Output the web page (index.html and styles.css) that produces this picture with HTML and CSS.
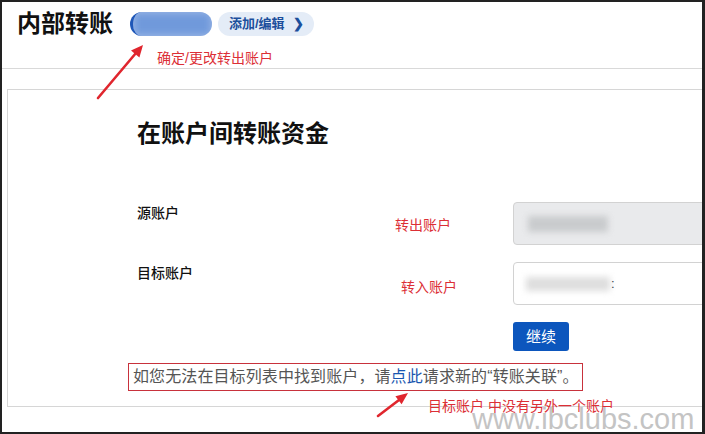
FILE: index.html
```html
<!DOCTYPE html>
<html lang="zh-CN">
<head>
    <meta charset="UTF-8">
    <meta name="viewport" content="width=device-width, initial-scale=1.0">
    <title>内部转账</title>
    <link rel="stylesheet" href="styles.css">
</head>
<body>
    <div class="screen">
        <header class="topbar">
            <h1>内部转账</h1>
            <span class="acct-chip"><span class="smudge"></span></span>
            <a class="edit-pill" href="#">添加/编辑 <span class="chev">&#x276F;</span></a>
        </header>

        <div class="card">
            <h2>在账户间转账资金</h2>
            <div class="form">
                <div class="label">源账户</div>
                <div class="note">转出账户</div>
                <div class="field disabled"><span class="smudge"></span></div>

                <div class="label">目标账户</div>
                <div class="note note-in">转入账户</div>
                <div class="field"><span class="smudge light"></span><span class="colon">:</span></div>

                <div class="btn-cell"><button class="btn">继续</button></div>
            </div>
            <div class="hint">如您无法在目标列表中找到账户，请<a href="#">点此</a>请求新的“转账关联”。</div>
        </div>

        <!-- notes drawn over the page -->
        <div class="mark mark-top">确定/更改转出账户</div>
        <div class="mark mark-bottom">目标账户 中没有另外一个账户</div>
        <svg class="arrows" width="705" height="434" viewBox="0 0 705 434">
            <line x1="98" y1="98" x2="136" y2="53" stroke="#e0262e" stroke-width="2.6" stroke-linecap="round"/>
            <polygon points="143,45 139.4,57.6 131,50.6" fill="#e0262e"/>
            <line x1="378" y1="416" x2="399" y2="400" stroke="#e0262e" stroke-width="2.6" stroke-linecap="round"/>
            <polygon points="408,393 401.6,404.2 395.4,396.2" fill="#e0262e"/>
        </svg>
        <div class="watermark">www.ibclubs.com</div>
    </div>
</body>
</html>
```

FILE: styles.css
```css
* { box-sizing: border-box; }
body { margin: 0; background: #fff; font-family: "Liberation Sans", "Noto Sans CJK SC", sans-serif; color: #111; }
.screen { position: relative; width: 705px; height: 434px; overflow: hidden; border: 2px solid #222; border-right-width: 3px; background: #fff; }

.topbar { height: 67px; border-bottom: 1px solid #d9d9d9; display: flex; align-items: flex-start; padding: 8px 0 0 15px; }
.topbar h1 { margin: 0; font-size: 24px; line-height: 28px; font-weight: 700; color: #111; }
.acct-chip { width: 82px; height: 24px; margin: 2px 0 0 17px; border-radius: 12px; border-left: 3px solid #1f57b8; overflow: hidden; position: relative; background: #a9c1e9; }
.acct-chip .smudge { display: block; width: 100%; height: 100%; background: #7099db; filter: blur(4px); }
.edit-pill { height: 24px; margin: 2px 0 0 6px; padding: 0 10px 0 11px; border-radius: 12px; background: #e4ecf7; color: #1c4f9c; font-size: 13px; font-weight: 700; line-height: 24px; text-decoration: none; display: flex; gap: 8px; }
.edit-pill .chev { font-size: 13px; }

.card { width: 760px; height: 318px; margin: 20px 0 0 5px; border: 1px solid #d6d6d6; padding: 28px 0 0 129px; }
.card h2 { margin: 0; font-size: 24px; line-height: 32px; font-weight: 700; }

.form { display: grid; grid-template-columns: 258px 118px 260px; row-gap: 17px; margin-top: 52px; }
.label { font-size: 14px; line-height: 20px; font-weight: 500; padding-top: 1px; }
.note { font-size: 14px; line-height: 20px; color: #dc2f36; padding-top: 13px; }
.note-in { padding: 15px 0 0 6px; }
.field { height: 43px; border: 1px solid #d2d2d2; border-radius: 4px; background: #fff; display: flex; align-items: center; padding-left: 12px; }
.field.disabled { background: #e9eaec; padding-left: 14px; }
.smudge { display: block; width: 80px; height: 16px; background: #c9cbcd; filter: blur(3px); }
.smudge.light { width: 84px; height: 14px; background: #dedede; }
.colon { font-size: 13px; margin-left: 1px; color: #222; }
.btn-cell { grid-column: 3; }
.btn { height: 29px; padding: 0 13px; border: 0; border-radius: 3px; background: #0c56bd; color: #fff; font-family: inherit; font-size: 15px; line-height: 29px; }

.hint { display: inline-block; margin: 12px 0 0 -9px; padding: 0 3px 0 4px; border: 1px solid #c8323c; font-size: 16px; letter-spacing: 0.1px; line-height: 26px; color: #555; }
.hint a { color: #1a56b0; text-decoration: none; }

.mark { position: absolute; font-size: 14px; line-height: 20px; color: #dc2f36; }
.mark-top { left: 155px; top: 46px; }
.mark-bottom { left: 426px; top: 394px; }
.arrows { position: absolute; left: -2px; top: -2px; pointer-events: none; }
.watermark { position: absolute; left: 470px; top: 403px; font-size: 29px; line-height: 29px; color: #c4c4c4; font-family: "Liberation Sans", sans-serif; }
```
